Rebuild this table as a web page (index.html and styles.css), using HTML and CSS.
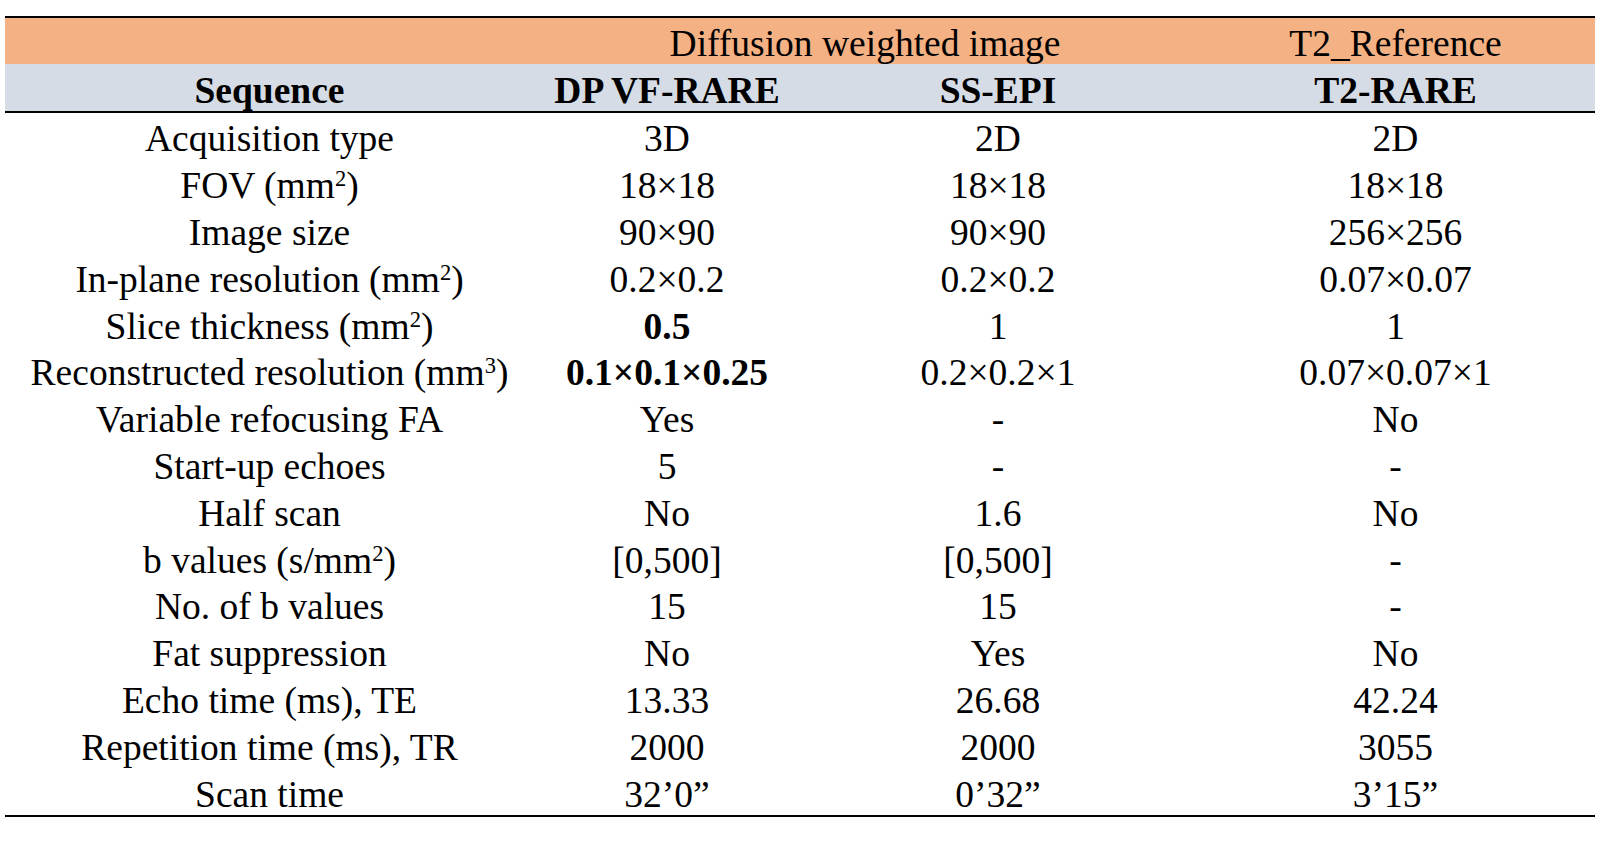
FILE: index.html
```html
<!DOCTYPE html>
<html>
<head>
<meta charset="utf-8">
<title>Sequence parameters</title>
<link rel="stylesheet" href="styles.css">
</head>
<body>
<div class="wrap">
<table class="params">
  <colgroup>
    <col class="c1"><col class="c2"><col class="c3"><col class="c4">
  </colgroup>
  <thead>
    <tr class="group">
      <th></th>
      <th colspan="2">Diffusion weighted image</th>
      <th>T2_Reference</th>
    </tr>
    <tr class="heads">
      <th>Sequence</th>
      <th>DP VF-RARE</th>
      <th>SS-EPI</th>
      <th>T2-RARE</th>
    </tr>
  </thead>
  <tbody>
    <tr><td>Acquisition type</td><td>3D</td><td>2D</td><td>2D</td></tr>
    <tr><td>FOV (mm<sup>2</sup>)</td><td>18×18</td><td>18×18</td><td>18×18</td></tr>
    <tr><td>Image size</td><td>90×90</td><td>90×90</td><td>256×256</td></tr>
    <tr><td>In-plane resolution (mm<sup>2</sup>)</td><td>0.2×0.2</td><td>0.2×0.2</td><td>0.07×0.07</td></tr>
    <tr><td>Slice thickness (mm<sup>2</sup>)</td><td class="b">0.5</td><td>1</td><td>1</td></tr>
    <tr><td>Reconstructed resolution (mm<sup>3</sup>)</td><td class="b">0.1×0.1×0.25</td><td>0.2×0.2×1</td><td>0.07×0.07×1</td></tr>
    <tr><td>Variable refocusing FA</td><td>Yes</td><td>-</td><td>No</td></tr>
    <tr><td>Start-up echoes</td><td>5</td><td>-</td><td>-</td></tr>
    <tr><td>Half scan</td><td>No</td><td>1.6</td><td>No</td></tr>
    <tr><td>b values (s/mm<sup>2</sup>)</td><td>[0,500]</td><td>[0,500]</td><td>-</td></tr>
    <tr><td>No. of b values</td><td>15</td><td>15</td><td>-</td></tr>
    <tr><td>Fat suppression</td><td>No</td><td>Yes</td><td>No</td></tr>
    <tr><td>Echo time (ms), TE</td><td>13.33</td><td>26.68</td><td>42.24</td></tr>
    <tr><td>Repetition time (ms), TR</td><td>2000</td><td>2000</td><td>3055</td></tr>
    <tr><td>Scan time</td><td>32’0”</td><td>0’32”</td><td>3’15”</td></tr>
  </tbody>
</table>
</div>
</body>
</html>
```

FILE: styles.css
```css
html, body {
  margin: 0;
  padding: 0;
  background: #ffffff;
}

.wrap {
  padding: 16px 5px 0 5px;
}

.params {
  width: 1590px;
  border-collapse: collapse;
  table-layout: fixed;
  font-family: "Liberation Serif", "Times New Roman", serif;
  font-size: 37.5px;
  color: #000;
  border-top: 2px solid #000;
  border-bottom: 2px solid #000;
}

.c1 { width: 529px; }
.c2 { width: 266px; }
.c3 { width: 396px; }
.c4 { width: 399px; }

.params th,
.params td {
  padding: 5px 0 0 0;
  text-align: center;
  vertical-align: middle;
  line-height: 41px;
  white-space: nowrap;
}

.group th {
  background: #f4b183;
  font-weight: normal;
  height: 40px;
  padding-top: 5px;
}

.heads th {
  background: #d6dce5;
  font-weight: bold;
  height: 40px;
  padding-top: 6px;
  border-bottom: 2px solid #000;
}

.params tbody td {
  height: 41.8px;
}

.params td.b {
  font-weight: bold;
}

.params sup {
  font-size: 0.6em;
  line-height: 0;
  vertical-align: 0.55em;
}
```
